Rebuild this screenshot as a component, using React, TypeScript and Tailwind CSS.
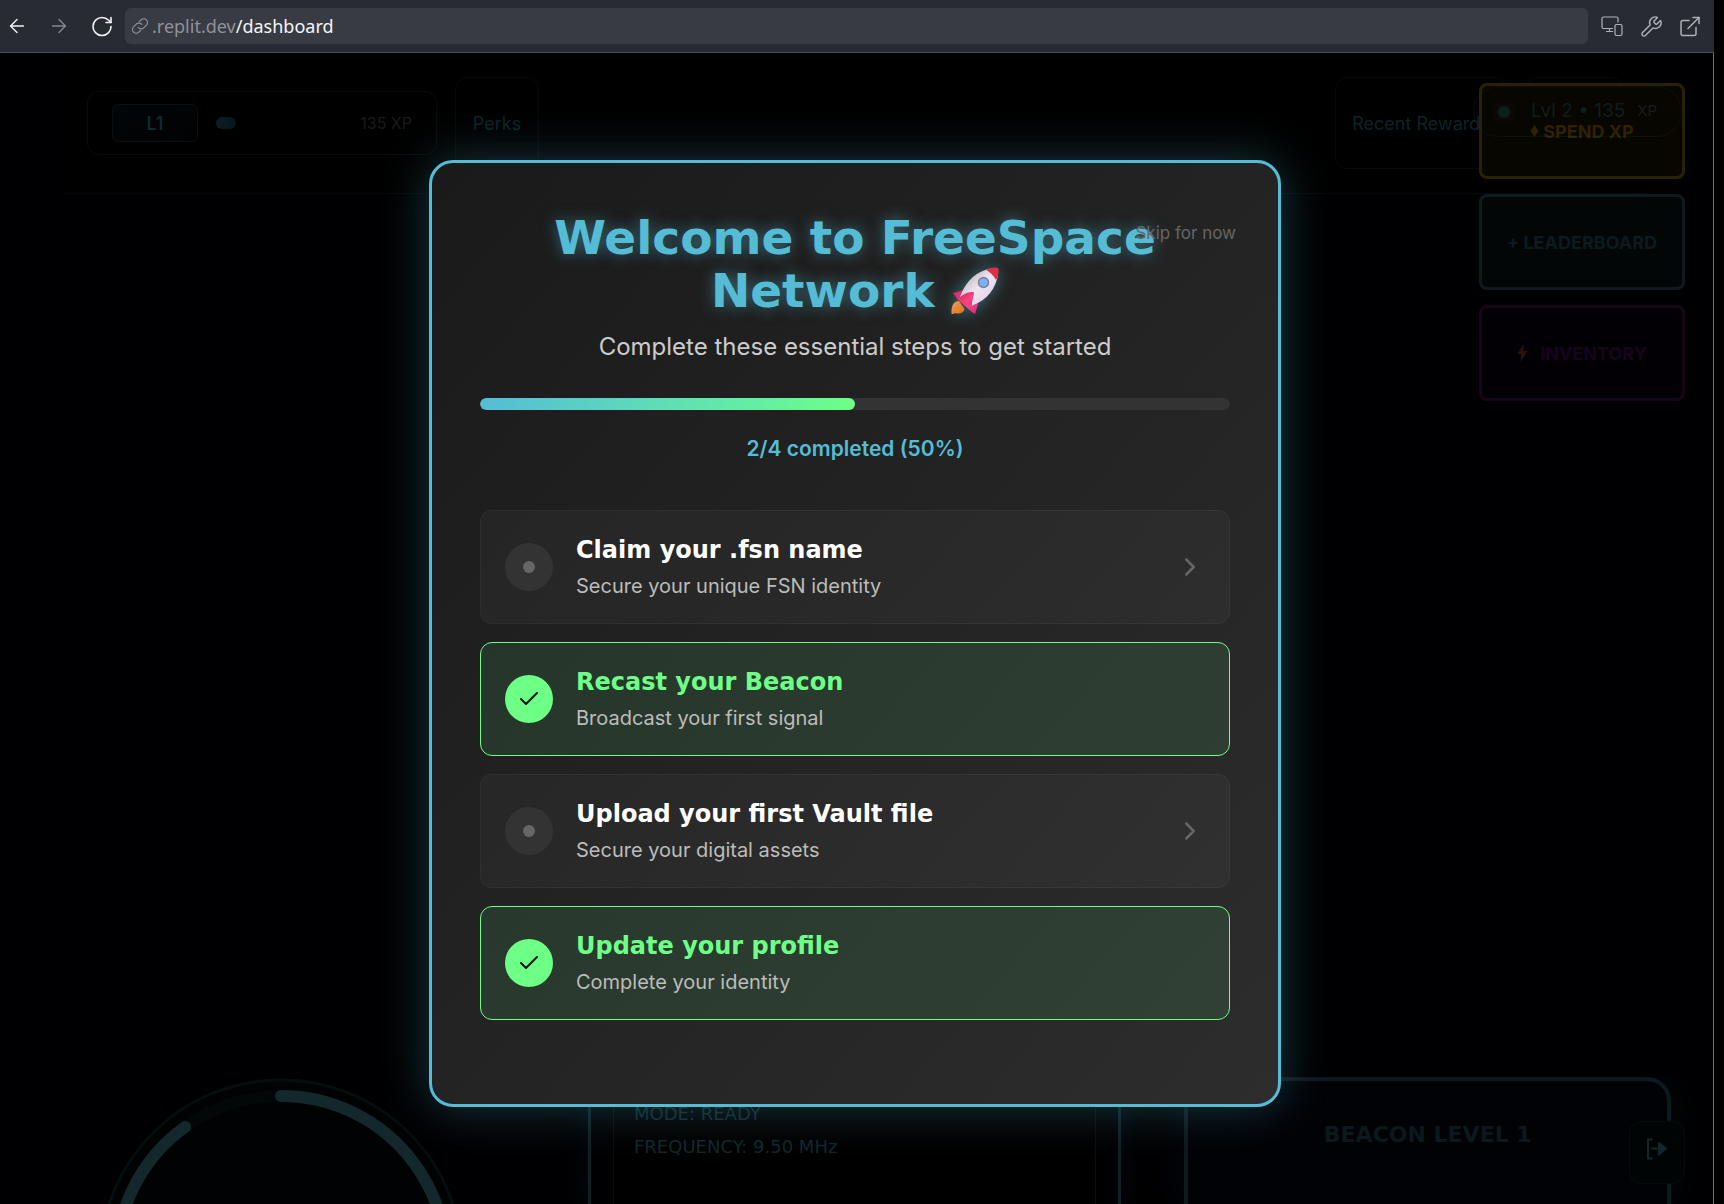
import React from "react";
import { ArrowLeft, ArrowRight, Check, ChevronRight, ExternalLink, RotateCw, Wrench } from "lucide-react";

type Step = { title: string; detail: string; done: boolean };

const steps: Step[] = [
  { title: "Claim your .fsn name", detail: "Secure your unique FSN identity", done: false },
  { title: "Recast your Beacon", detail: "Broadcast your first signal", done: true },
  { title: "Upload your first Vault file", detail: "Secure your digital assets", done: false },
  { title: "Update your profile", detail: "Complete your identity", done: true },
];

function LinkIcon() {
  return (
    <svg viewBox="0 0 24 24" className="size-[18px] shrink-0" fill="none" stroke="currentColor" strokeWidth="1.6" strokeLinecap="round" strokeLinejoin="round" aria-hidden="true">
      <path d="M9.5 14a5 5 0 0 0 7.5.5l3.6-3.6a5 5 0 0 0-7.1-7.1L11.300 6" />
      <path d="M14.500 10a5 5 0 0 0-7.500-.5l-3.600 3.600a5 5 0 0 0 7.100 7.100L12.700 18" />
    </svg>
  );
}

function DevicesIcon() {
  return (
    <svg viewBox="0 0 22 22" className="size-[22px]" fill="none" stroke="currentColor" strokeWidth="1.2" strokeLinecap="round" strokeLinejoin="round" aria-hidden="true">
      <path d="M11.500 13.500H2.500a1.500 1.500 0 0 1-1.500-1.500V3.500A1.500 1.500 0 0 1 2.500 2h13A1.500 1.500 0 0 1 17 3.500V7M8.500 13.500v3M5.500 16.500h6" />
      <rect x="14" y="9.500" width="7" height="11" rx="1.500" />
    </svg>
  );
}

function BrowserBar() {
  return (
    <header className="flex h-[53px] shrink-0 items-center border-b border-[#464c5e] bg-[#292b33] pl-[6px] pr-3 text-[#aeb1b7]">
      <button aria-label="Back" className="flex w-[22px] justify-center text-[#f2f3f5]">
        <ArrowLeft size={24} strokeWidth={1.5} />
      </button>
      <button aria-label="Forward" className="ml-5 flex w-[22px] justify-center text-[#85878e]">
        <ArrowRight size={24} strokeWidth={1.5} />
      </button>
      <button aria-label="Reload" className="ml-5 flex w-6 justify-center text-[#f2f3f5]">
        <RotateCw size={25} strokeWidth={1.6} />
      </button>
      <a
        href="/dashboard"
        className="ml-[11px] flex h-9 flex-1 items-center gap-[3px] rounded-md bg-[#393b43] pl-[6px] text-[18px] text-[#8f9299]"
        style={{ fontFamily: "'Noto Sans', 'Open Sans', sans-serif" }}
      >
        <LinkIcon />
        <span>
          .replit.dev<span className="text-[#f5f6f7]">/dashboard</span>
        </span>
      </a>
      <button aria-label="Devices" className="ml-3 flex w-6 justify-center">
        <DevicesIcon />
      </button>
      <button aria-label="Developer tools" className="ml-[15px] flex w-6 justify-center">
        <Wrench size={23} strokeWidth={1.5} />
      </button>
      <button aria-label="Open in new tab" className="ml-[15px] flex w-6 justify-center">
        <ExternalLink size={25} strokeWidth={1.5} />
      </button>
    </header>
  );
}

function TopStrip() {
  return (
    <div className="ml-[63px] mr-[66px] flex h-[141px] items-start justify-between border-b border-[#050a0b] bg-black pl-6 pr-6 pt-6">
      <div className="flex items-start gap-[18px]">
        <div className="mt-[14px] flex h-16 w-[350px] items-center rounded-xl border border-[#070d0e] pl-6 pr-6">
          <div className="flex h-[38px] w-[86px] items-center justify-center rounded-md border border-[#061114] bg-gradient-to-br from-[#020608] to-[#010204] text-[18px] font-semibold text-[#102a2e]">
            L1
          </div>
          <div className="ml-[18px] h-3 w-5 rounded-full bg-gradient-to-r from-[#0c2024] to-[#06141e]" />
          <span className="ml-auto text-[16px] text-[#1b1b1b]">135 XP</span>
        </div>
        <button className="h-[92px] w-[84px] rounded-xl border border-[#060a0b] text-[18px] text-[#0c2429]">Perks</button>
      </div>
      <div className="flex items-start gap-[18px]">
        <button className="h-[92px] w-[172px] whitespace-nowrap rounded-xl border border-[#060a0b] text-[18px] text-[#0c2429]">Recent Rewards</button>
        <div className="h-[92px] w-[98px] rounded-xl border border-[#060a0b]" />
      </div>
    </div>
  );
}

function SideActions() {
  const base = "flex h-24 w-full items-center justify-center rounded-lg border-[3px] text-[18px] font-bold";
  return (
    <nav className="absolute right-[28px] top-[30px] flex w-[206px] flex-col gap-[15px]">
      <div className="relative">
        <button className={`${base} border-[#2a2104] bg-[#080600] text-[#2e2200]`}>
          <svg viewBox="0 0 8 12" className="mr-1 h-3 w-[9px]" fill="currentColor" aria-hidden="true">
            <path d="M4 0l4 6-4 6-4-6z" />
          </svg>
          SPEND XP
        </button>
        <div className="absolute -left-[6px] top-[3px] flex h-[51px] w-[209px] items-center rounded-full border border-[#5fd0d0]/5 pl-6 pr-6 text-[#111d1b]">
          <span className="size-3 rounded-full bg-[#0f1e1a] shadow-[0_0_8px_#0f1e1a]" />
          <span className="ml-auto text-[19px]">Lvl 2 • 135</span>
          <span className="ml-3 text-[15px] text-[#1b1b17]">XP</span>
        </div>
      </div>
      <button className={`${base} border-[#0c1b1f] bg-[#030607] text-[#0c1b20]`}>+ LEADERBOARD</button>
      <button className={`${base} border-[#190519] bg-[#030005] text-[#16051b]`}>
        <svg viewBox="0 0 10 18" className="mr-3 h-[18px] w-[11px]" fill="#2c1507" aria-hidden="true">
          <path d="M6 0L0 10h4l-1 8 7-11H6z" />
        </svg>
        INVENTORY
      </button>
    </nav>
  );
}

function Gauge() {
  return (
    <svg viewBox="0 0 364 127" className="h-[127px] w-[364px] shrink-0" fill="none" aria-hidden="true">
      <circle cx="182" cy="184" r="181" stroke="#060d0e" strokeWidth="3" fill="#010203" />
      <circle cx="182" cy="184" r="165" stroke="#030708" strokeWidth="12" />
      <path d="M182 19A165 165 0 1 1 86 50" stroke="#12282a" strokeWidth="12" strokeLinecap="round" />
    </svg>
  );
}

function LowerPanels() {
  const display = { fontFamily: "'DejaVu Sans', sans-serif" };
  return (
    <div className="absolute inset-x-0 bottom-0 grid h-[127px] grid-cols-[489px_533fr_549fr] overflow-hidden pl-[99px] pr-[42px]">
      <Gauge />
      <section className="flex border-x-[3px] border-[#0e2024] px-[22px] shadow-[0_0_30px_#040b10]">
        <div className="flex-1 border-x border-[#061012] bg-black pl-5 pt-5 text-[18px] leading-[33px] text-[#12272c]" style={display}>
          <p>MODE: READY</p>
          <p>FREQUENCY: 9.50 MHz</p>
        </div>
      </section>
      <section className="ml-[63px] rounded-t-3xl border-x-4 border-t-4 border-[#0c191e] bg-[#010206] shadow-[0_0_40px_#04090d]">
        <h2 className="pt-9 text-center text-[22px] font-bold leading-9 text-[#0c181d]" style={display}>
          BEACON LEVEL 1
        </h2>
      </section>
    </div>
  );
}

function Rocket() {
  return (
    <svg viewBox="0 0 48 48" className="inline-block size-12 align-[-8px] drop-shadow-[0_0_8px_#55bcd680]" role="img" aria-label="rocket">
      <defs>
        <linearGradient id="hull" x1="0" y1="0" x2="1" y2="1">
          <stop offset="0.15" stopColor="#b9b3b8" />
          <stop offset="0.5" stopColor="#f1e6ef" />
          <stop offset="0.9" stopColor="#dccbea" />
        </linearGradient>
        <linearGradient id="fin" x1="0" y1="0" x2="1" y2="1">
          <stop offset="0" stopColor="#d52462" />
          <stop offset="0.6" stopColor="#f8477f" />
          <stop offset="1" stopColor="#d62a8c" />
        </linearGradient>
        <linearGradient id="flame" x1="0" y1="0" x2="1" y2="1">
          <stop offset="0" stopColor="#e9a04f" />
          <stop offset="1" stopColor="#e2701d" />
        </linearGradient>
      </defs>
      <path d="M8 34c-5 0-8 4-7.500 13 2 .3 3-.8 4-1 2 1 8 1 9-4z" fill="url(#flame)" />
      <path d="M9 34l10 10 3-4-9-9z" fill="#4a3494" />
      <path d="M13 23L2 26l5 7 14 12 3 2 3-10-6-14z" fill="url(#fin)" />
      <path d="M9 30C15 13 26 4 41 1l6 6c-2 14-10 26-27 32 1-5 2-8 3-13-5 0-9 1-14 4z" fill="url(#hull)" />
      <path d="M9 31c4-5 8-6 14-6-1 5-2 8-2 14L9 31z" fill="url(#fin)" />
      <path d="M35 3c5-3 11-3 12-2 1 1 1 7-2 12-2-4-6-8-10-10z" fill="#dc3049" />
      <circle cx="32.500" cy="15.500" r="5.800" fill="#85809c" />
      <circle cx="32.500" cy="15.500" r="4.100" fill="#75b4fb" />
    </svg>
  );
}

function StepCard({ step }: { step: Step }) {
  return (
    <li>
      <button
        className={`flex w-full items-center gap-[23px] rounded-xl border p-6 text-left ${
          step.done ? "border-[#6eff87] bg-[#6eff87]/10" : "border-white/4 bg-white/3"
        }`}
      >
        <span className={`flex size-12 shrink-0 items-center justify-center rounded-full ${step.done ? "bg-[#6eff87] text-[#111]" : "bg-[#333]"}`}>
          {step.done ? <Check size={24} strokeWidth={2} /> : <span className="size-3 rounded-full bg-[#666]" />}
        </span>
        <span className="flex flex-1 flex-col gap-2">
          <span
            className={`text-[24px] font-bold leading-[30px] ${step.done ? "text-[#6eff87]" : "text-white"}`}
            style={{ fontFamily: "'DejaVu Sans', sans-serif" }}
          >
            {step.title}
          </span>
          <span className="text-[20px] leading-[26px] text-[#bcbcbc]">{step.detail}</span>
        </span>
        {!step.done && <ChevronRight size={30} strokeWidth={2} className="text-[#666]" />}
      </button>
    </li>
  );
}

function WelcomeDialog() {
  const done = steps.filter((s) => s.done).length;
  const percent = Math.round((done / steps.length) * 100);
  return (
    <div className="absolute inset-0 flex items-start justify-center pr-[3px] pt-[107px]">
      <div
        role="dialog"
        aria-labelledby="welcome-title"
        className="relative w-full max-w-[852px] rounded-3xl border-[3px] border-[#55bcd6] bg-gradient-to-br from-[#1a1a1a] to-[#2d2d2d] px-12 pb-[84px] pt-12 shadow-[0_0_48px_rgba(85,188,214,0.3)]"
      >
        <div className="text-center">
          <h1
            id="welcome-title"
            className="text-[47px] font-bold leading-[53px] text-[#55bcd6] [text-shadow:0_0_15px_rgba(85,188,214,0.5)]"
            style={{ fontFamily: "'DejaVu Sans', sans-serif" }}
          >
            Welcome to FreeSpace
            <br />
            Network <Rocket />
          </h1>
          <p className="mt-[13px] text-[24px] leading-[33px] text-[#ccc]">Complete these essential steps to get started</p>
          <div className="mt-[35px] h-3 overflow-hidden rounded-full bg-[#333]" role="progressbar" aria-valuenow={percent} aria-valuemin={0} aria-valuemax={100} aria-label="Steps completed">
            <div className="h-full rounded-full bg-gradient-to-r from-[#55bcd6] to-[#6eff87]" style={{ width: `${percent}%` }} />
          </div>
          <p className="mt-6 text-[21px] font-semibold leading-[30px] text-[#55bcd6]">
            {done}/{steps.length} completed ({percent}%)
          </p>
        </div>
        <ul className="mt-[46px] flex flex-col gap-[18px]">
          {steps.map((s) => (
            <StepCard key={s.title} step={s} />
          ))}
        </ul>
        <button className="absolute right-6 top-[50px] px-[18px] py-2 text-[17px] leading-6 text-[#666]">Skip for now</button>
      </div>
    </div>
  );
}

export default function App() {
  return (
    <div className="h-screen overflow-hidden bg-black pr-[10px]" style={{ fontFamily: "Inter, 'Open Sans', sans-serif" }}>
      <div className="flex h-full flex-col">
        <BrowserBar />
        <main className="relative flex-1 overflow-hidden border-r border-[#6e6e6e] bg-[#000003]">
          <TopStrip />
          <SideActions />
          <LowerPanels />
          <button aria-label="Log out" className="absolute bottom-5 right-[28px] flex h-[63px] w-14 items-center justify-center rounded-xl border border-[#060c0d] bg-[#010405] pb-2">
            <svg viewBox="0 0 22 22" className="size-[22px]" fill="none" stroke="#10282a" strokeWidth="2" strokeLinejoin="round" strokeLinecap="round" aria-hidden="true">
              <path d="M6 1.500H2v19h4M6 10.500h7" />
              <path d="M13 5l7 5.500-7 6z" fill="#10282a" />
            </svg>
          </button>
          <WelcomeDialog />
        </main>
      </div>
    </div>
  );
}
